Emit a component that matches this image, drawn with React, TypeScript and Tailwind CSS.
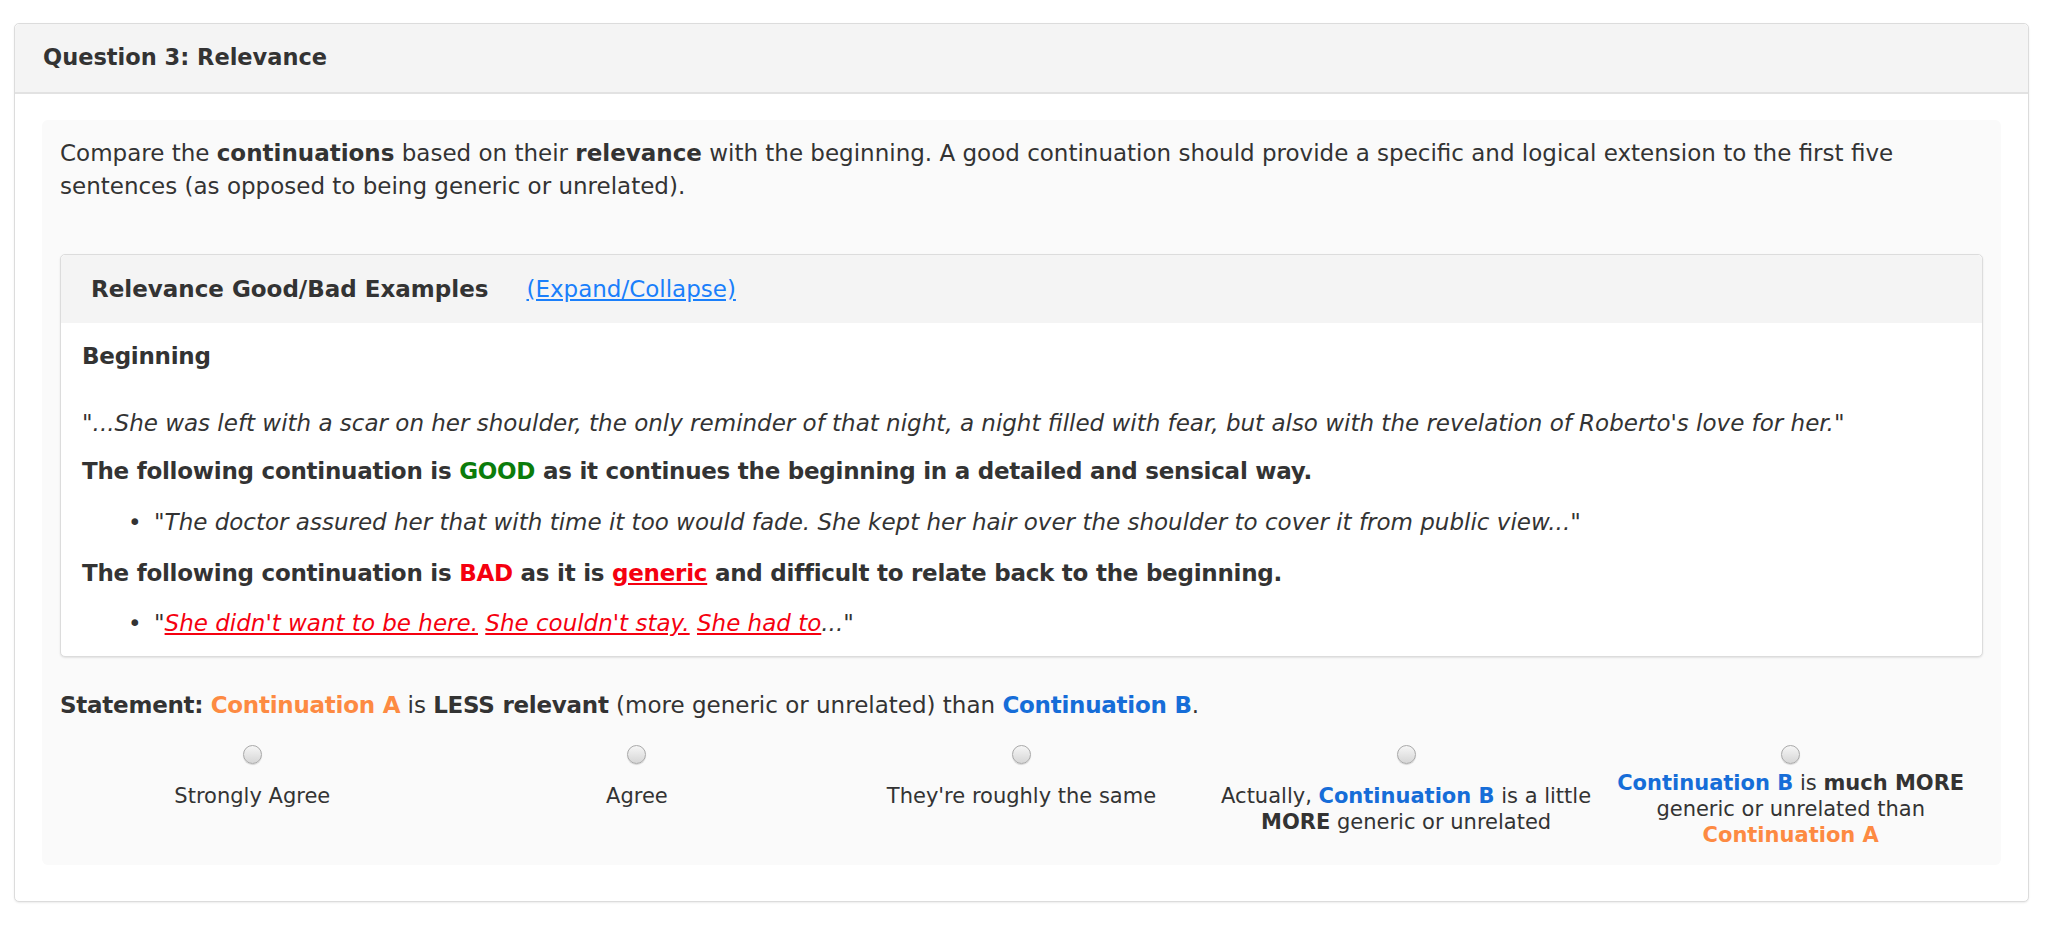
import React from "react";

const ORANGE = "text-[#fd8a42]";
const BLUE = "text-[#166dd8]";
const RED = "text-[#f5000f]";

const OPTIONS: React.ReactNode[] = [
  <>Strongly Agree</>,
  <>Agree</>,
  <>They're roughly the same</>,
  <>
    Actually, <b className={BLUE}>Continuation B</b> is a little
    <br />
    <b>MORE</b> generic or unrelated
  </>,
  <>
    <b className={BLUE}>Continuation B</b> is <b>much MORE</b>
    <br />
    generic or unrelated than
    <br />
    <b className={ORANGE}>Continuation A</b>
  </>,
];

function Radio() {
  return (
    <input
      type="radio"
      name="q3"
      className="h-[19px] w-[19px] appearance-none rounded-full border border-[#a9a9a9] bg-gradient-to-b from-[#f6f6f6] to-[#d6d6d6] shadow-[0_1px_1px_rgba(0,0,0,0.15)]"
    />
  );
}

function Bullet({ children }: { children: React.ReactNode }) {
  return (
    <li className="flex">
      <span className="w-[26px] shrink-0">•</span>
      <span>{children}</span>
    </li>
  );
}

export default function App() {
  return (
    <div className="min-h-screen bg-white pl-[14px] pr-[23px] pt-[23px] pb-8 font-['DejaVu_Sans',Verdana,sans-serif] text-[#333]">
      <div className="rounded-[5px] border border-[#dcdcdc] bg-white shadow-[0_1px_2px_rgba(0,0,0,0.08)]">
        <div className="flex h-[70px] items-center rounded-t-[5px] border-b-2 border-[#e2e2e2] bg-[#f4f4f4] px-[28px] text-[22.5px] font-bold">
          Question 3: Relevance
        </div>

        <div className="px-[27px] pb-[36px] pt-[26px]">
          <div className="rounded-[6px] bg-[#fafafa] px-[18px] pb-[17px] pt-[17px]">
            <p className="text-[23px] leading-[33px]">
              Compare the <b>continuations</b> based on their <b>relevance</b>{" "}
              with the beginning. A good continuation should provide a specific
              and logical extension to the first five sentences (as opposed to
              being generic or unrelated).
            </p>

            <div className="mt-[51px] rounded-[5px] border border-[#dcdcdc] bg-white shadow-[0_1px_2px_rgba(0,0,0,0.1)]">
              <div className="flex h-[68px] items-center gap-[38px] rounded-t-[5px] bg-[#f4f4f4] px-[30px] text-[23px]">
                <span className="font-bold">Relevance Good/Bad Examples</span>
                <a href="#" className="text-[#1a7ffb] underline">
                  (Expand/Collapse)
                </a>
              </div>

              <div className="px-[21px] pb-[17px] pt-[17px] text-[23px] leading-[32px]">
                <p className="font-bold tracking-[-0.25px]">Beginning</p>
                <p className="mt-[35px]">
                  "
                  <i>
                    ...She was left with a scar on her shoulder, the only
                    reminder of that night, a night filled with fear, but also
                    with the revelation of Roberto's love for her.
                  </i>
                  "
                </p>
                <p className="mt-[16px] font-bold tracking-[-0.25px]">
                  The following continuation is{" "}
                  <span className="text-[#0b7c0b]">GOOD</span> as it continues
                  the beginning in a detailed and sensical way.
                </p>
                <ul className="mt-[19px] pl-[46px]">
                  <Bullet>
                    "
                    <i>
                      The doctor assured her that with time it too would fade.
                      She kept her hair over the shoulder to cover it from
                      public view...
                    </i>
                    "
                  </Bullet>
                </ul>
                <p className="mt-[19px] font-bold tracking-[-0.25px]">
                  The following continuation is{" "}
                  <span className={RED}>BAD</span> as it is{" "}
                  <span className={`${RED} underline`}>generic</span> and
                  difficult to relate back to the beginning.
                </p>
                <ul className="mt-[18px] pl-[46px]">
                  <Bullet>
                    "
                    <i>
                      <span className={`${RED} underline`}>
                        She didn't want to be here.
                      </span>{" "}
                      <span className={`${RED} underline`}>
                        She couldn't stay.
                      </span>{" "}
                      <span className={`${RED} underline`}>She had to</span>
                      ...
                    </i>
                    "
                  </Bullet>
                </ul>
              </div>
            </div>

            <p className="mt-[32px] text-[23px] leading-[32px]">
              <b className="tracking-[-0.25px]">Statement:</b>{" "}
              <b className={`${ORANGE} tracking-[-0.25px]`}>Continuation A</b>{" "}
              is <b className="tracking-[-0.25px]">LESS relevant</b> (more
              generic or unrelated) than{" "}
              <b className={`${BLUE} tracking-[-0.25px]`}>Continuation B</b>.
            </p>

            <div className="mt-[24px] grid grid-cols-5">
              {OPTIONS.map((label, i) => (
                <label
                  key={i}
                  className="flex flex-col items-center text-center text-[21px] leading-[26px]"
                >
                  <Radio />
                  <span
                    className={`whitespace-nowrap ${
                      i === 4 ? "mt-[6px]" : "mt-[19px]"
                    }`}
                  >
                    {label}
                  </span>
                </label>
              ))}
            </div>
          </div>
        </div>
      </div>
    </div>
  );
}
